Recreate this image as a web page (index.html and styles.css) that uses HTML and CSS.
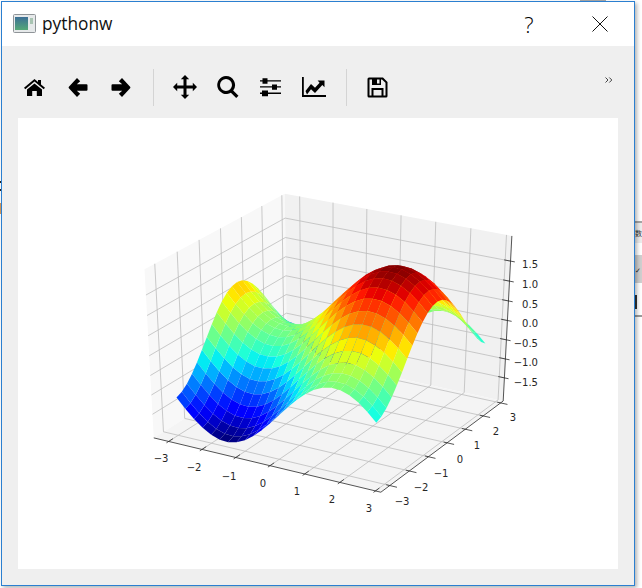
FILE: index.html
```html
<!DOCTYPE html>
<html lang="en">
<head>
<meta charset="utf-8">
<title>pythonw</title>
<link rel="stylesheet" href="styles.css">
</head>
<body>
<div class="desk">
  <span class="frag frag-top"></span>
  <span class="frag frag-cjk">数</span>
  <span class="frag frag-check">✓</span>
  <span class="frag frag-arrow"></span>
  <span class="frag frag-rule"></span>
  <span class="frag frag-orange"></span>
  <span class="frag frag-dash1"></span>
  <span class="frag frag-dash2"></span>
  <main class="window">
    <header class="titlebar">
      <svg class="appicon" width="23" height="19" viewBox="0 0 23 19">
        <defs><linearGradient id="ig" x1="0" y1="0" x2="0" y2="1"><stop offset="0" stop-color="#3c6f96"/><stop offset="1" stop-color="#55a877"/></linearGradient></defs>
        <rect x="0.5" y="0.5" width="22" height="18" rx="1" fill="#e6e9ea" stroke="#8f9498"/>
        <rect x="2" y="3" width="13" height="13" fill="url(#ig)"/>
        <rect x="17" y="4" width="3" height="6" fill="#a8c4b2"/>
      </svg>
      <span class="apptitle">pythonw</span>
      <span class="help">?</span>
      <svg class="close" width="16" height="16" viewBox="0 0 16 16"><path d="M.5.5l15 15M15.5.5l-15 15" stroke="#111" stroke-width="1" fill="none"/></svg>
    </header>
    <nav class="toolbar">
      <span class="tool"><svg width="21" height="17" viewBox="0 0 21 17"><path d="M10.500 0 14 2.900V1h3v4.400l4 3.400-1.300 1.500L10.500 2.600 1.300 10.300 0 8.800z"/><path d="M3 10.600 10.500 4.400 18 10.600V17h-5.200v-5H8.200v5H3z"/></svg></span>
      <span class="tool"><svg width="20" height="21" viewBox="0 0 20 21"><path d="M9 1 12.200 4.200 8.800 7.200H18.500a1 1 0 0 1 1 1v4.600a1 1 0 0 1-1 1H8.800l3.400 3L9 20 .9 11.200a1 1 0 0 1 0-1.400z"/></svg></span>
      <span class="tool"><svg width="20" height="21" viewBox="0 0 20 21"><path d="M11 1 7.800 4.200 11.200 7.200H1.500a1 1 0 0 0-1 1v4.600a1 1 0 0 0 1 1H11.200l-3.400 3L11 20l8.100-8.800a1 1 0 0 0 0-1.400z"/></svg></span>
      <span class="sep"></span>
      <span class="tool"><svg width="24" height="24" viewBox="0 0 24 24"><path d="M12 0l4.200 4.200h-2.700v6.300h6.300V7.800L24 12l-4.200 4.200v-2.700h-6.300v6.300h2.700L12 24l-4.200-4.200h2.700v-6.300H4.200v2.700L0 12l4.200-4.200v2.700h6.300V4.200H7.800z"/></svg></span>
      <span class="tool"><svg width="22" height="22" viewBox="0 0 22 22"><path fill-rule="evenodd" d="M9 0a9 9 0 0 1 7.200 14.400l5.300 5.300-2.300 2.300-5.300-5.300A9 9 0 1 1 9 0zm0 3a6 6 0 1 0 0 12A6 6 0 0 0 9 3z"/></svg></span>
      <span class="tool"><svg width="21" height="20" viewBox="0 0 21 20"><path d="M0 3.300h2.500V1.200h5v2.100H21v1.300H7.500v2.200h-5V4.600H0zM0 9.300h12V7.400h5v1.900h4v1.300h-4v2.200h-5v-2.200H0zM0 15.600h2V13.400h6v2.200h13v1.300H8v2.300H2v-2.300H0z"/></svg></span>
      <span class="tool"><svg width="24" height="20" viewBox="0 0 24 20"><path d="M0 0h1.800v18H24v2H0z"/><path d="M3.500 14 9 7l4 3.800 4.600-5-2-2.300h6.900v6.700l-2.200-2.200-7.300 8-4-3.800-4 5.200z"/></svg></span>
      <span class="sep"></span>
      <span class="tool"><svg width="21" height="21" viewBox="0 0 21 21"><path fill-rule="evenodd" d="M2 .5h14l4.500 4.500v14a1.500 1.500 0 0 1-1.500 1.500H2A1.500 1.500 0 0 1 .5 19V2A1.500 1.500 0 0 1 2 .5zm.5 2V18.500H4.500V11h12v7.500h2V5.800l-3.500-3.300H14V8H5V2.500zM6.500 13v5.500h8V13zM10 2.500V6.500h2.500V2.500z"/></svg></span>
      <svg class="more" width="8" height="6" viewBox="0 0 8 6"><path d="M.5.5 3 3 .5 5.500M4.300.5 6.800 3 4.300 5.500" fill="none" stroke="#444" stroke-width="1"/></svg>
    </nav>
    <section class="canvas">
      <svg id="plot" class="plot" width="600" height="451" viewBox="18 118 600 451" role="img" aria-label="3D surface plot"></svg>
    </section>
  </main>
</div>
<script src="plot.js"></script>
</body>
</html>
```

FILE: styles.css
```css
* { box-sizing: border-box; }
html, body { margin: 0; height: 100%; background: #fff; overflow: hidden; }
.desk { position: relative; width: 642px; height: 588px; padding: 1px 0 0 1px; background: #fff; }
.window {
  width: 634px; height: 585px;
  border: 1px solid #2b7fd0;
  background: #efefef;
  box-shadow: 2px 2px 4px rgba(0,0,0,.3);
  display: flex; flex-direction: column;
  position: relative;
}
.titlebar {
  height: 44px; flex: none; background: #fff;
  display: flex; align-items: center;
  padding-left: 11px;
  font-family: "Open Sans", "Noto Sans", sans-serif;
  color: #111;
}
.appicon { flex: none; margin-top: -1px; }
.apptitle { margin-left: 6px; font-size: 17.3px; margin-top: -1px; }
.help { margin-left: auto; font-size: 22px; line-height: 22px; font-weight: 300; width: 16px; text-align: center; color: #000; }
.close { margin: 0 26px 0 55px; }
.toolbar {
  height: 72px; flex: none;
  display: flex; align-items: center;
  padding: 10px 0 0 11px;
}
.tool { width: 43px; height: 24px; flex: none; display: flex; align-items: center; justify-content: center; }
.tool svg { fill: #000; }
.sep { width: 1px; height: 37px; margin: 0 9px 0 11px; background: #d4d4d4; flex: none; }
.more { margin: -15px 21px 0 auto; flex: none; }
.canvas { width: 600px; height: 451px; margin-left: 16px; background: #fff; flex: none; }
.plot { display: block; }
.plot text { font: 10px "DejaVu Sans", sans-serif; fill: #262626; }
.frag { position: absolute; display: block; }
.frag-top { left: 580px; top: 0; width: 26px; height: 1px; background: #a8a8a8; }
.frag-cjk { left: 635px; top: 221px; width: 7px; height: 22px; font: 7px/20px "Noto Sans CJK SC", sans-serif; color: #333; background: #ececec; border-top: 2px solid #a5a5a5; }
.frag-check { left: 635px; top: 255px; width: 7px; height: 28px; font: 7px/32px "DejaVu Sans", sans-serif; color: #222; background: #cfcfcf; }
.frag-arrow { left: 635px; top: 295px; width: 2px; height: 14px; background: #333; }
.frag-rule { left: 635px; top: 315px; width: 7px; height: 2px; background: #9a9a9a; }
.frag-orange { left: 0; top: 203px; width: 1px; height: 11px; background: #d59a5c; }
.frag-dash1 { left: 0; top: 181px; width: 1px; height: 2px; background: #222; }
.frag-dash2 { left: 0; top: 189px; width: 1px; height: 2px; background: #222; }
```

FILE: plot.js
```js
(function () {
  var svg = document.getElementById('plot');
  var NS = 'http://www.w3.org/2000/svg';
  var XL = [-3.45, 3.15], YL = [-3.45, 3.15], ZL = [-2.12, 2.12];
  var STEP = 0.25, N = 24;
  function f(x, y) { return Math.sin(x) + Math.cos(y); }

  // camera: elev 30, azim -60, dist 10 on a unit cube
  var e = 30 * Math.PI / 180, a = -60 * Math.PI / 180, D = 10;
  var eye = [D * Math.cos(e) * Math.cos(a), D * Math.cos(e) * Math.sin(a), D * Math.sin(e)];
  function norm(v) { var l = Math.hypot(v[0], v[1], v[2]); return [v[0] / l, v[1] / l, v[2] / l]; }
  function cross(p, q) { return [p[1] * q[2] - p[2] * q[1], p[2] * q[0] - p[0] * q[2], p[0] * q[1] - p[1] * q[0]]; }
  function dot(p, q) { return p[0] * q[0] + p[1] * q[1] + p[2] * q[2]; }
  var w = norm(eye), u = norm(cross([0, 0, 1], w)), v = cross(w, u);
  function un(t, l) { return (t - (l[0] + l[1]) / 2) / (l[1] - l[0]); }
  function raw(x, y, z) {
    var p = [un(x, XL) - eye[0], un(y, YL) - eye[1], un(z, ZL) - eye[2]];
    var d = -dot(p, w);
    return { x: dot(p, u) / d, y: dot(p, v) / d, d: d };
  }
  var x0 = XL[0], x1 = XL[1], y0 = YL[0], y1 = YL[1], z0 = ZL[0], z1 = ZL[1];
  // calibration points from the plot's box corners on the page
  var cal = [
    [x0, y0, z0, 154, 438], [x1, y0, z0, 382, 492], [x1, y1, z0, 503, 402],
    [x0, y1, z1, 283, 195], [x1, y1, z1, 512, 236], [x0, y0, z1, 145, 267]
  ];
  function fit(key, idx) {
    var n = 0, sx = 0, sy = 0, sxx = 0, sxy = 0;
    cal.forEach(function (c) {
      var r = raw(c[0], c[1], c[2])[key], t = c[idx];
      n++; sx += r; sy += t; sxx += r * r; sxy += r * t;
    });
    var A = (n * sxy - sx * sy) / (n * sxx - sx * sx);
    return { A: A, B: (sy - A * sx) / n };
  }
  var fx = fit('x', 3), fy = fit('y', 4);
  function P(x, y, z) {
    var r = raw(x, y, z);
    return [fx.A * r.x + fx.B, fy.A * r.y + fy.B, r.d];
  }
  function pts(list) { return list.map(function (p) { var q = P(p[0], p[1], p[2]); return q[0].toFixed(2) + ',' + q[1].toFixed(2); }).join(' '); }
  function el(name, attrs) {
    var n = document.createElementNS(NS, name);
    for (var k in attrs) n.setAttribute(k, attrs[k]);
    svg.appendChild(n);
    return n;
  }
  function poly(list, fill) { el('polygon', { points: pts(list), fill: fill }); }
  function line(list, color, wd) { el('polyline', { points: pts(list), fill: 'none', stroke: color, 'stroke-width': wd }); }

  poly([[x0, y0, z0], [x0, y1, z0], [x0, y1, z1], [x0, y0, z1]], '#f8f8f8');
  poly([[x0, y1, z0], [x1, y1, z0], [x1, y1, z1], [x0, y1, z1]], '#f1f1f1');
  poly([[x0, y0, z0], [x1, y0, z0], [x1, y1, z0], [x0, y1, z0]], '#f4f4f4');

  var ticks = [-3, -2, -1, 0, 1, 2, 3], zt = [-1.5, -1, -0.5, 0, 0.5, 1, 1.5];
  var G = '#bcbcbc';
  ticks.forEach(function (t) {
    line([[t, y0, z0], [t, y1, z0], [t, y1, z1]], G, 0.8);
    line([[x0, t, z1], [x0, t, z0], [x1, t, z0]], G, 0.8);
  });
  zt.forEach(function (t) { line([[x0, y0, t], [x0, y1, t], [x1, y1, t]], G, 0.8); });

  var AX = '#2a2a2a';
  line([[x0, y0, z0], [x1, y0, z0]], AX, 0.8);
  line([[x1, y0, z0], [x1, y1, z0]], AX, 0.8);
  line([[x1, y1, z0], [x1, y1, z1]], AX, 0.8);
  ticks.forEach(function (t) {
    line([[t, y0 - 0.1, z0], [t, y0 + 0.2, z0]], AX, 0.8);
    line([[x1 + 0.2, t, z0], [x1 - 0.1, t, z0]], AX, 0.8);
  });
  zt.forEach(function (t) { line([[x1 + 0.12, y1, t], [x1 - 0.18, y1, t]], AX, 0.8); });

  // matplotlib's jet segment table
  function seg(s, t) {
    for (var k = 1; k < t.length; k++) {
      if (s <= t[k][0]) return t[k - 1][1] + (t[k][1] - t[k - 1][1]) * (s - t[k - 1][0]) / (t[k][0] - t[k - 1][0]);
    }
    return t[t.length - 1][1];
  }
  var JR = [[0, 0], [0.35, 0], [0.66, 1], [0.89, 1], [1, 0.5]];
  var JG = [[0, 0], [0.125, 0], [0.375, 1], [0.64, 1], [0.91, 0], [1, 0]];
  var JB = [[0, 0.5], [0.11, 1], [0.34, 1], [0.65, 0], [1, 0]];
  function jet(s) {
    return 'rgb(' + Math.round(255 * seg(s, JR)) + ',' + Math.round(255 * seg(s, JG)) + ',' + Math.round(255 * seg(s, JB)) + ')';
  }
  var vals = [], i, j;
  for (i = 0; i < N; i++) {
    vals[i] = [];
    for (j = 0; j < N; j++) {
      var x = -3 + STEP * i, y = -3 + STEP * j;
      vals[i][j] = [x, y, f(x, y)];
    }
  }
  var faces = [], zmin = 1e9, zmax = -1e9;
  for (i = 0; i < N - 1; i++) for (j = 0; j < N - 1; j++) {
    var q = [vals[i][j], vals[i + 1][j], vals[i + 1][j + 1], vals[i][j + 1]];
    var mz = (q[0][2] + q[1][2] + q[2][2] + q[3][2]) / 4;
    var depth = q.reduce(function (s, p) { return s + P(p[0], p[1], p[2])[2]; }, 0) / 4;
    zmin = Math.min(zmin, mz); zmax = Math.max(zmax, mz);
    faces.push({ q: q, z: mz, d: depth });
  }
  faces.sort(function (p, r) { return r.d - p.d; });
  faces.forEach(function (o) { poly(o.q, jet((o.z - zmin) / (zmax - zmin))); });

  function label(s, x, y, anchor) {
    var t = el('text', { x: x, y: y, 'text-anchor': anchor || 'middle', 'dominant-baseline': 'central' });
    t.textContent = s;
  }
  [['−3', 161, 458], ['−2', 194, 467], ['−1', 229, 476], ['0', 263, 483], ['1', 297, 491], ['2', 332, 499], ['3', 369, 508]].forEach(function (l) { label(l[0], l[1], l[2]); });
  [['−3', 402, 501], ['−2', 421, 487], ['−1', 441, 473], ['0', 460, 459], ['1', 477, 445], ['2', 496, 431], ['3', 513, 417]].forEach(function (l) { label(l[0], l[1], l[2]); });
  [['1.5', 264], ['1.0', 284], ['0.5', 304], ['0.0', 323], ['−0.5', 343], ['−1.0', 362], ['−1.5', 382]].forEach(function (l) { label(l[0], 538, l[1], 'end'); });
})();
```
